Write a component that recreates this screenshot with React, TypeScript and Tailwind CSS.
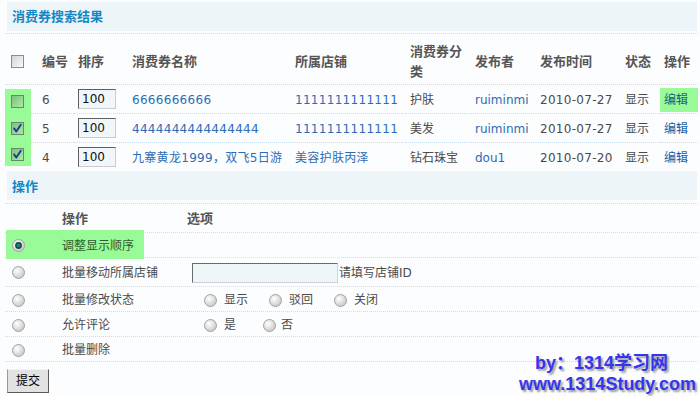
import React from "react";

function CheckBox({ id, checked, tone }: { id: string; checked?: boolean; tone: "gray" | "green" }) {
  const g = tone === "gray";
  return (
    <svg width="13" height="13" viewBox="0 0 13 13" className="block">
      <defs>
        <linearGradient id={id} x1="0" y1="0" x2="1" y2="1">
          <stop offset="0" stopColor={g ? "#d2d2d2" : "#78c078"} />
          <stop offset="1" stopColor={g ? "#fbfbfb" : "#b2eaa8"} />
        </linearGradient>
      </defs>
      <rect x="0.5" y="0.5" width="12" height="12" fill={`url(#${id})`} stroke={g ? "#8c8c8c" : "#6b866b"} />
      {checked && <path d="M3.2 6.4 L5.3 9.6 L9.8 2.8" stroke="#1b3a94" strokeWidth="1.9" fill="none" strokeLinecap="round" strokeLinejoin="round" />}
    </svg>
  );
}

function Radio({ id, checked }: { id: string; checked?: boolean }) {
  return (
    <svg width="13" height="13" viewBox="0 0 13 13" className="block shrink-0">
      <defs>
        <radialGradient id={id} cx="0.38" cy="0.35" r="0.75">
          <stop offset="0" stopColor="#ffffff" />
          <stop offset="1" stopColor="#c2c2c2" />
        </radialGradient>
      </defs>
      <circle cx="6.5" cy="6.5" r="6" fill={`url(#${id})`} stroke="#a2a2a2" />
      {checked && (
        <>
          <circle cx="6.5" cy="6.5" r="3.4" fill="#0d4f46" />
          <circle cx="6.5" cy="6.5" r="1.8" fill="#1f8a6a" />
        </>
      )}
    </svg>
  );
}

const line = "border-b border-dotted border-[#c9dff0]";
const cols = "grid grid-cols-[26px_43px_54px_163px_115px_65px_65px_85px_39px_38px]";

type Row = {
  id: string;
  no: string;
  checked: boolean;
  name: string;
  shop: string;
  cat: string;
  author: string;
  date: string;
};

const rows: Row[] = [
  { id: "r1", no: "6", checked: false, name: "6666666666", shop: "1111111111111", cat: "护肤", author: "ruiminmi", date: "2010-07-27" },
  { id: "r2", no: "5", checked: true, name: "4444444444444444", shop: "1111111111111", cat: "美发", author: "ruiminmi", date: "2010-07-27" },
  { id: "r3", no: "4", checked: true, name: "九寨黄龙1999，双飞5日游", shop: "美容护肤丙泽", cat: "钻石珠宝", author: "dou1", date: "2010-07-20" },
];

function InputBox({ w }: { w: string }) {
  return (
    <div className={`${w} h-[20px] border border-t-[#6a6a6a] border-l-[#6a6a6a] border-b-[#cdd2d4] border-r-[#cdd2d4] bg-[#eef6fa]`} />
  );
}

export default function App() {
  return (
    <div className="relative w-[700px] h-[396px] overflow-hidden bg-[#fcfdfe] text-[12px] leading-[16px] text-[#4a4a4a] font-['DejaVu_Sans','Noto_Sans_CJK_SC',sans-serif]">
      <div className="pt-[2px]">
        <div className="ml-[7px] w-[690px] h-[29px] bg-[#eef5f9] flex items-center pl-[5px] pt-[1px] font-bold text-[13px] text-[#1287c4]">
          消费券搜索结果
        </div>
      </div>

      <div className="mt-[2px] ml-[5px] w-[693px]">
        <div className={`${cols} h-[52px] pt-[5px] border-t border-b border-dotted border-[#c9dff0] font-bold text-[13px] text-[#555]`}>
          <div className="flex items-center pl-[6px]">
            <CheckBox id="hcb" tone="gray" />
          </div>
          <div className="flex items-center pl-[11px]">编号</div>
          <div className="flex items-center pl-[4px]">排序</div>
          <div className="flex items-center pl-[4px]">消费券名称</div>
          <div className="flex items-center pl-[4px]">所属店铺</div>
          <div className="flex items-center pl-[4px] pr-[4px] leading-[20px]">消费券分类</div>
          <div className="flex items-center pl-[4px]">发布者</div>
          <div className="flex items-center pl-[4px]">发布时间</div>
          <div className="flex items-center pl-[4px]">状态</div>
          <div className="flex items-center pl-[4px]">操作</div>
        </div>

        {rows.map((r, i) => {
          const last = i === rows.length - 1;
          const b = last ? "" : line;
          return (
            <div key={r.id} className={`${cols} ${last ? "h-[28px]" : "h-[29px]"}`}>
              <div className={`flex flex-col ${i === 0 ? "pt-[4px]" : ""} ${last ? "pb-[5px]" : ""}`}>
                <div className="flex-1 bg-[#98fb98] flex items-center pl-[6px]">
                  <CheckBox id={`cb${i}`} tone="green" checked={r.checked} />
                </div>
              </div>
              <div className={`flex items-center pl-[11px] pt-[1px] ${b}`}>{r.no}</div>
              <div className={`flex items-center pl-[4px] ${b}`}>
                <div className="w-[38px] h-[20px] border border-t-[#5e5e5e] border-l-[#5e5e5e] border-b-[#c8cccf] border-r-[#c8cccf] bg-[#f0f6f9] flex items-center pl-[3px] text-[#111]">
                  100
                </div>
              </div>
              <div className={`flex items-center pl-[4px] pt-[1px] text-[#2d6cb4] tracking-[0.3px] whitespace-nowrap ${b}`}>{r.name}</div>
              <div className={`flex items-center pl-[4px] pt-[1px] text-[#2d6cb4] tracking-[0.3px] whitespace-nowrap ${b}`}>{r.shop}</div>
              <div className={`flex items-center pl-[4px] pt-[1px] ${b}`}>{r.cat}</div>
              <div className={`flex items-center pl-[4px] pt-[1px] text-[#2d6cb4] ${b}`}>{r.author}</div>
              <div className={`flex items-center pl-[4px] pt-[1px] tracking-[0.3px] ${b}`}>{r.date}</div>
              <div className={`flex items-center pl-[4px] pt-[1px] ${b}`}>显示</div>
              {i === 0 ? (
                <div className={`flex flex-col pt-[3px] pb-[1px] ${b}`}>
                  <div className="flex-1 bg-[#98fb98] flex items-center pl-[4px] text-[#17627a]">编辑</div>
                </div>
              ) : (
                <div className={`flex items-center pl-[4px] pt-[1px] text-[#1d5c9e] ${b}`}>编辑</div>
              )}
            </div>
          );
        })}
      </div>

      <div className="ml-[7px] w-[690px] h-[29px] bg-[#eef5f9] flex items-center pl-[5px] pt-[2px] font-bold text-[13px] text-[#1287c4]">
        操作
      </div>

      <div className="mt-[3px] ml-[5px] w-[693px] border-t border-dotted border-[#c9dff0]">
        <div className={`flex items-center h-[29px] pt-[2px] ${line} font-bold text-[13px] text-[#555]`}>
          <div className="w-[57px]" />
          <div className="w-[125px]">操作</div>
          <div>选项</div>
        </div>

        <div className={`flex items-start h-[25px] ${line}`}>
          <div className="-mt-[3px] ml-[1px] w-[138px] h-[29px] bg-[#98fb98] flex items-center pt-[2px]">
            <div className="ml-[6px]">
              <Radio id="o1" checked />
            </div>
            <div className="ml-[37px] text-[#2f5a2f]">调整显示顺序</div>
          </div>
        </div>

        <div className={`flex items-center h-[29px] pt-[1px] ${line}`}>
          <div className="w-[57px] pl-[7px]">
            <Radio id="o2" />
          </div>
          <div className="w-[125px]">批量移动所属店铺</div>
          <div className="flex items-center pl-[5px]">
            <InputBox w="w-[146px]" />
            <span className="ml-[1px]">请填写店铺ID</span>
          </div>
        </div>

        <div className={`flex items-center h-[25px] pt-[2px] ${line}`}>
          <div className="w-[57px] pl-[7px]">
            <Radio id="o3" />
          </div>
          <div className="w-[125px]">批量修改状态</div>
          <div className="flex items-center pl-[17px]">
            <Radio id="s1" />
            <span className="ml-[7px]">显示</span>
            <div className="ml-[21px]">
              <Radio id="s2" />
            </div>
            <span className="ml-[7px]">驳回</span>
            <div className="ml-[21px]">
              <Radio id="s3" />
            </div>
            <span className="ml-[7px]">关闭</span>
          </div>
        </div>

        <div className={`flex items-center h-[25px] pt-[2px] ${line}`}>
          <div className="w-[57px] pl-[7px]">
            <Radio id="o4" />
          </div>
          <div className="w-[125px]">允许评论</div>
          <div className="flex items-center pl-[17px]">
            <Radio id="c1" />
            <span className="ml-[7px]">是</span>
            <div className="ml-[27px]">
              <Radio id="c2" />
            </div>
            <span className="ml-[5px]">否</span>
          </div>
        </div>

        <div className={`flex items-center h-[25px] pt-[2px] ${line}`}>
          <div className="w-[57px] pl-[7px]">
            <Radio id="o5" />
          </div>
          <div className="w-[125px]">批量删除</div>
        </div>
      </div>

      <button className="mt-[7px] ml-[7px] w-[42px] h-[24px] bg-[#e2e2e2] border border-t-[#f4f4f4] border-l-[#9a9a9a] border-r-[#5a5a5a] border-b-[#5a5a5a] text-black text-[12px] flex items-center justify-center">
        提交
      </button>

      <div className="absolute left-[535px] top-[353px] whitespace-nowrap text-[18px] leading-[20px] font-bold text-[#3535ee] font-['Liberation_Sans','Noto_Sans_CJK_SC',sans-serif] [text-shadow:2px_2px_2px_#9a9a9a]">
        by：1314学习网
      </div>
      <div className="absolute left-[519px] top-[374px] whitespace-nowrap text-[18px] leading-[20px] font-bold text-[#3535ee] font-['Liberation_Sans','Noto_Sans_CJK_SC',sans-serif] [text-shadow:2px_2px_2px_#9a9a9a]">
        www.1314Study.com
      </div>
    </div>
  );
}
